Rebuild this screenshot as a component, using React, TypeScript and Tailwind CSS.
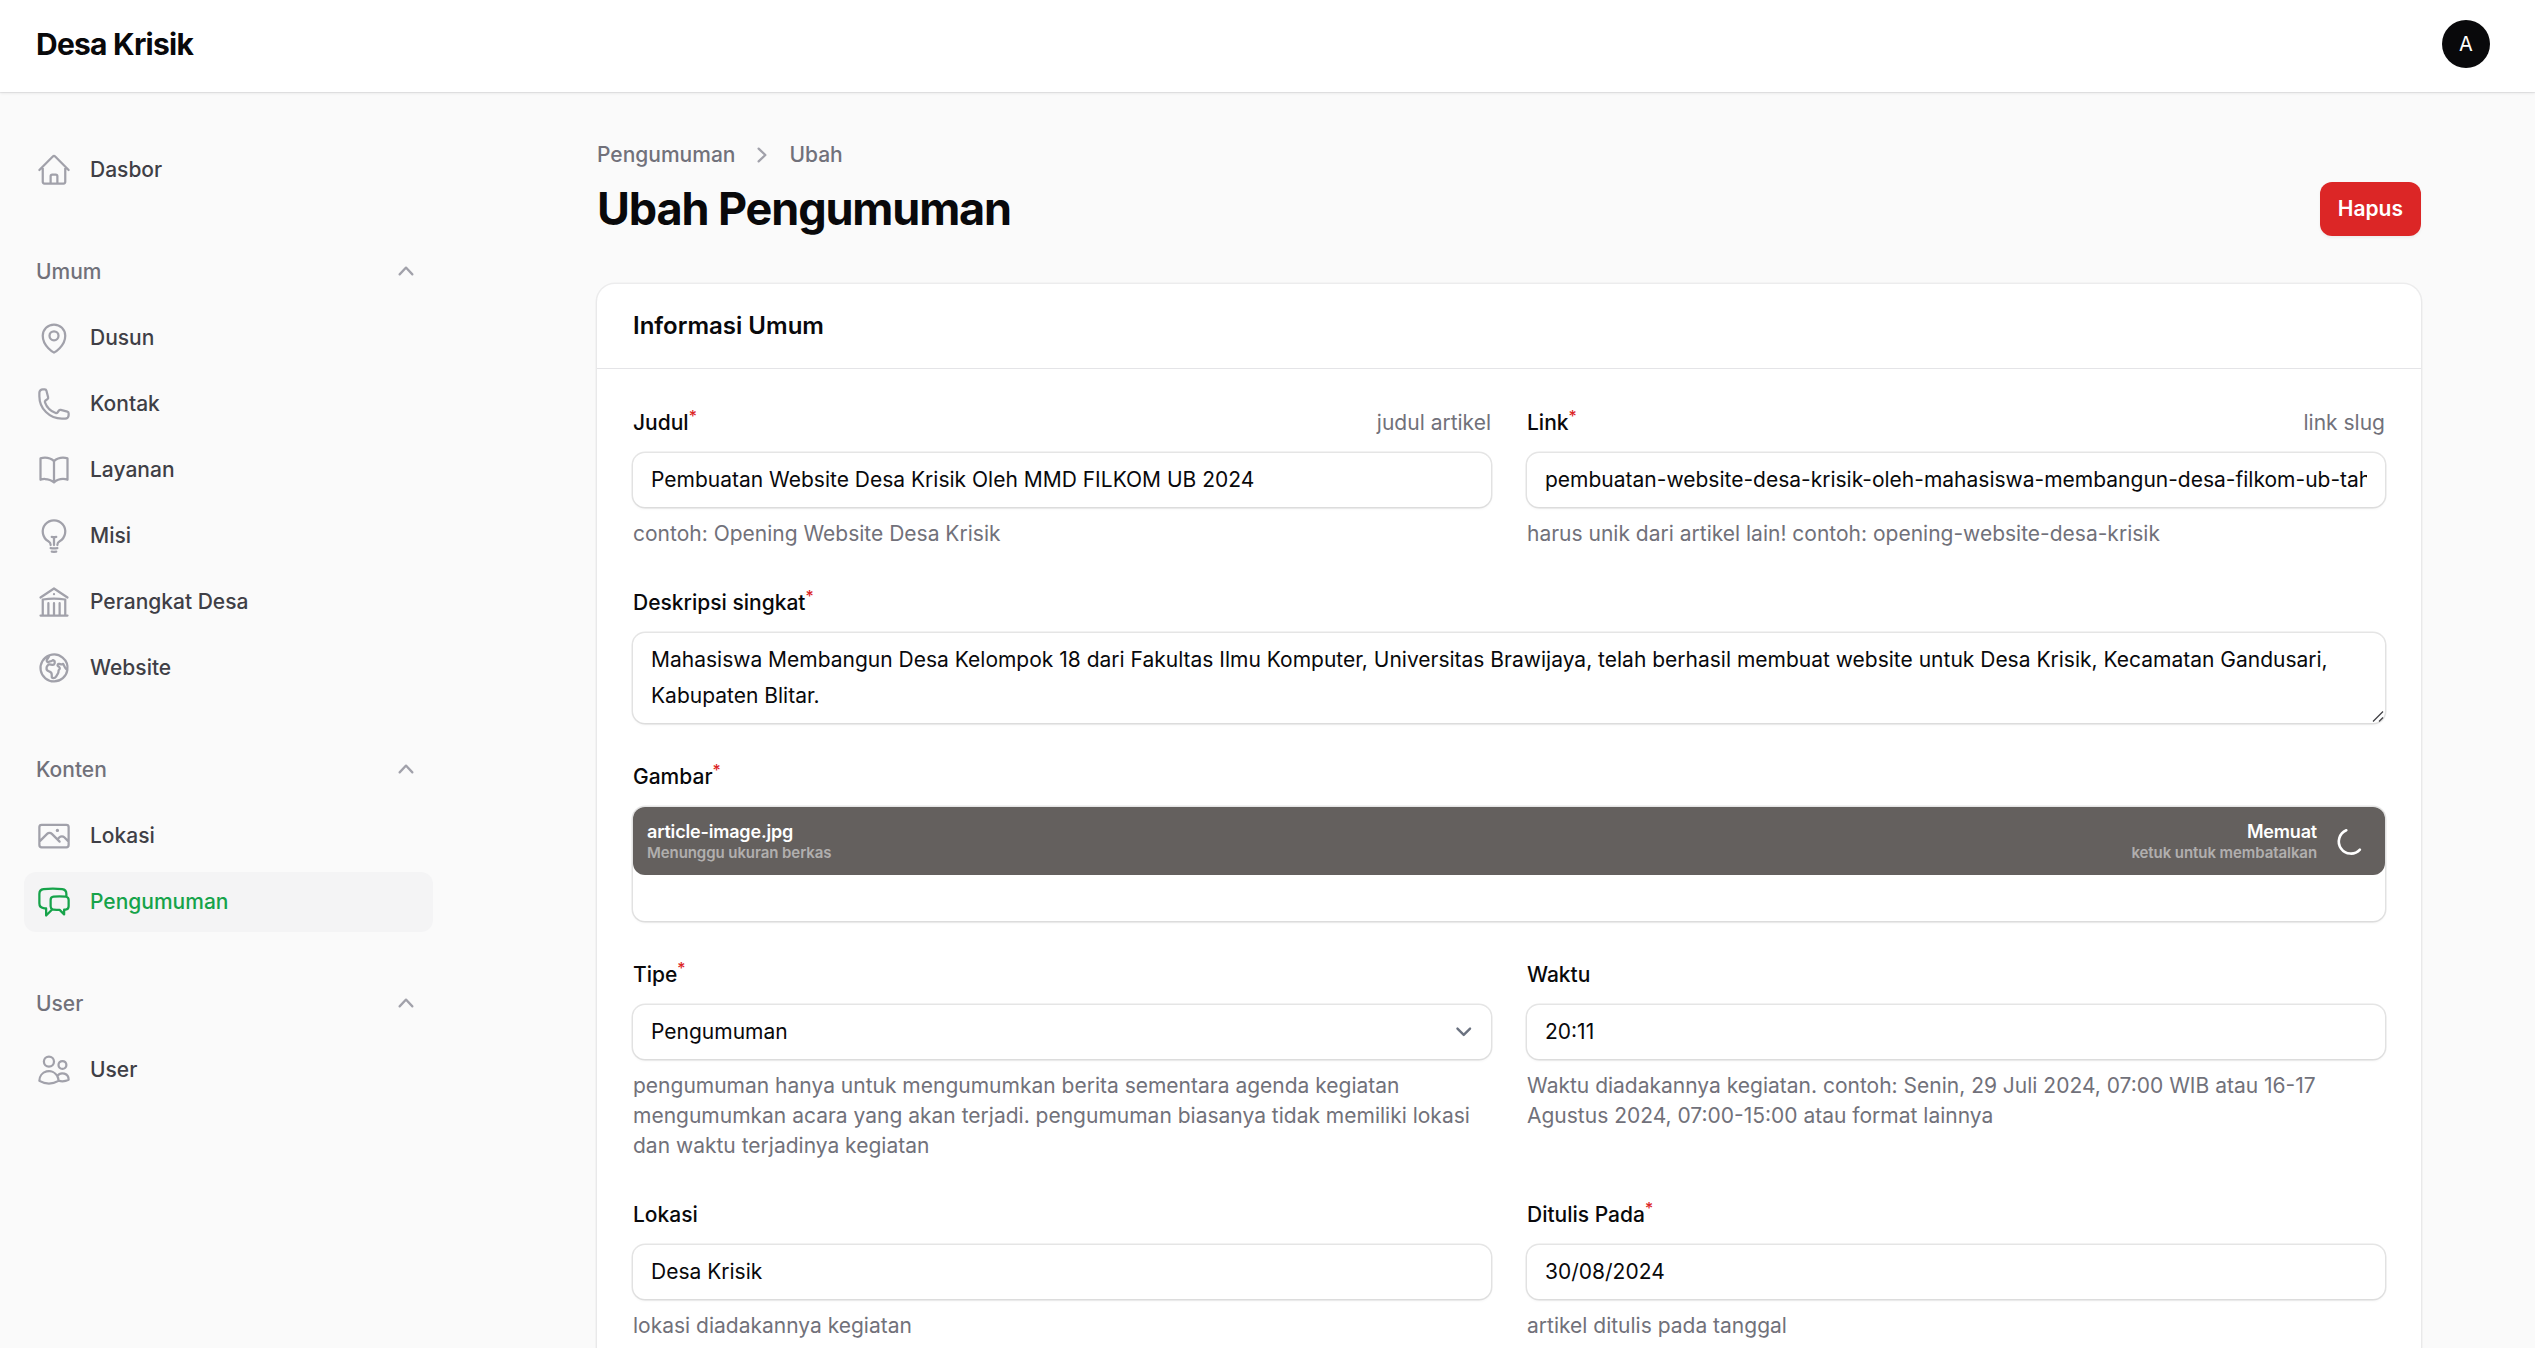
import React from "react";
import {
  HiOutlineBookOpen,
  HiOutlineBuildingLibrary,
  HiOutlineChatBubbleLeftRight,
  HiOutlineGlobeEuropeAfrica,
  HiOutlineHome,
  HiOutlineLightBulb,
  HiOutlineMapPin,
  HiOutlinePhone,
  HiOutlinePhoto,
  HiOutlineUsers,
} from "react-icons/hi2";

type IconType = React.ComponentType<{ className?: string }>;

type Item = { label: string; icon: IconType; active?: boolean };

const GROUPS: { label?: string; items: Item[] }[] = [
  { items: [{ label: "Dasbor", icon: HiOutlineHome }] },
  {
    label: "Umum",
    items: [
      { label: "Dusun", icon: HiOutlineMapPin },
      { label: "Kontak", icon: HiOutlinePhone },
      { label: "Layanan", icon: HiOutlineBookOpen },
      { label: "Misi", icon: HiOutlineLightBulb },
      { label: "Perangkat Desa", icon: HiOutlineBuildingLibrary },
      { label: "Website", icon: HiOutlineGlobeEuropeAfrica },
    ],
  },
  {
    label: "Konten",
    items: [
      { label: "Lokasi", icon: HiOutlinePhoto },
      { label: "Pengumuman", icon: HiOutlineChatBubbleLeftRight, active: true },
    ],
  },
  { label: "User", items: [{ label: "User", icon: HiOutlineUsers }] },
];

function Topbar() {
  return (
    <header className="relative z-10 flex h-[92px] shrink-0 items-center justify-between bg-white pr-[45px] pb-1 pl-9 shadow-[0_0_0_1px_rgba(9,9,11,0.05),0_1px_3px_0_rgba(0,0,0,0.1)]">
      <div className="text-[30px] leading-[30px] font-bold tracking-tight">Desa Krisik</div>
      <div className="flex size-12 items-center justify-center rounded-full bg-[#09090b] text-[20px] text-white">A</div>
    </header>
  );
}

function ChevronUp() {
  return (
    <svg viewBox="0 0 20 20" fill="#a1a1aa" className="mb-0.5 size-[30px]">
      <path
        fillRule="evenodd"
        clipRule="evenodd"
        d="M14.77 12.79a.75.75 0 0 1-1.06-.02L10 8.832 6.29 12.77a.75.75 0 1 1-1.08-1.04l4.25-4.5a.75.75 0 0 1 1.08 0l4.25 4.5a.75.75 0 0 1-.02 1.06Z"
      />
    </svg>
  );
}

function Sidebar() {
  return (
    <aside className="flex w-[457px] shrink-0 flex-col gap-[42px] px-6 py-12">
      {GROUPS.map((group, i) => (
        <div key={i} className="flex flex-col gap-1.5">
          {group.label && (
            <div className="flex h-[60px] items-center justify-between px-3 font-medium text-[#71717a]">
              <span>{group.label}</span>
              <ChevronUp />
            </div>
          )}
          {group.items.map((item) => (
            <a
              key={item.label}
              className={
                item.active
                  ? "flex h-[60px] items-center gap-[18px] rounded-xl bg-[#f4f4f5] px-3 font-medium text-[#16a34a]"
                  : "flex h-[60px] items-center gap-[18px] rounded-xl px-3 font-medium text-[#3f3f46]"
              }
            >
              <item.icon className={item.active ? "size-9 text-[#16a34a]" : "size-9 text-[#a1a1aa]"} />
              {item.label}
            </a>
          ))}
        </div>
      ))}
    </aside>
  );
}

type FieldProps = {
  label: string;
  required?: boolean;
  hint?: string;
  help?: string;
  wide?: boolean;
  children: React.ReactNode;
};

function Field({ label, required, hint, help, wide, children }: FieldProps) {
  return (
    <div className={wide ? "col-span-2 flex flex-col gap-3" : "flex min-w-0 flex-col gap-3"}>
      <div className="flex h-9 items-center justify-between">
        <span className="leading-9 font-medium">
          {label}
          {required && <sup className="text-[#dc2626]">*</sup>}
        </span>
        {hint && <span className="text-[#71717a]">{hint}</span>}
      </div>
      {children}
      {help && <p className="leading-[30px] text-[#71717a]">{help}</p>}
    </div>
  );
}

function Control({ children }: { children: React.ReactNode }) {
  return (
    <div className="rounded-xl bg-white shadow-[0_0_0_1.5px_rgba(9,9,11,0.1),0_1.5px_3px_0_rgba(0,0,0,0.05)]">
      {children}
    </div>
  );
}

function TextInput({ value }: { value: string }) {
  return (
    <Control>
      <div className="px-[18px] py-[9px]">
        <div className="h-9 overflow-hidden leading-9 whitespace-nowrap">{value}</div>
      </div>
    </Control>
  );
}

function Upload() {
  return (
    <Control>
      <div className="h-[114px]">
        <div className="flex h-[67.5px] items-center justify-between rounded-xl bg-[#64605e] pt-[2px] pr-[23px] pl-[14px] font-semibold text-white">
          <div className="flex flex-col">
            <span className="text-[18px] leading-[22px] tracking-[-0.01em]">article-image.jpg</span>
            <span className="text-[15px] leading-5 tracking-[-0.005em] text-white/50">Menunggu ukuran berkas</span>
          </div>
          <div className="flex items-center gap-[19px]">
            <div className="flex flex-col items-end">
              <span className="text-[18px] leading-[22px] tracking-[-0.01em]">Memuat</span>
              <span className="text-[15px] leading-5 tracking-[-0.005em] text-white/50">ketuk untuk membatalkan</span>
            </div>
            <svg viewBox="0 0 26 26" fill="none" className="size-[26px] overflow-visible">
              <path d="M10.3 1.3A12.1 12.1 0 1 0 23.9 20.6" stroke="#fff" strokeWidth="2.6" strokeLinecap="round" />
            </svg>
          </div>
        </div>
      </div>
    </Control>
  );
}

function PageHeader() {
  return (
    <div className="flex items-end justify-between">
      <div>
        <nav className="mb-3 flex h-[30px] items-center gap-3 font-medium text-[#71717a]">
          <span>Pengumuman</span>
          <svg viewBox="0 0 20 20" fill="#a1a1aa" className="size-[30px]">
            <path
              fillRule="evenodd"
              clipRule="evenodd"
              d="M7.21 14.77a.75.75 0 0 1 .02-1.06L11.168 10 7.23 6.29a.75.75 0 1 1 1.04-1.08l4.5 4.25a.75.75 0 0 1 0 1.08l-4.5 4.25a.75.75 0 0 1-1.06-.02Z"
            />
          </svg>
          <span>Ubah</span>
        </nav>
        <h1 className="text-[45px] leading-[54px] font-bold tracking-tight">Ubah Pengumuman</h1>
      </div>
      <button className="h-[54px] rounded-xl bg-[#dc2626] px-[18px] font-semibold text-white shadow-[0_1.5px_3px_0_rgba(0,0,0,0.05)]">
        Hapus
      </button>
    </div>
  );
}

export default function App() {
  return (
    <div className="flex h-[1348px] w-[2535px] flex-col overflow-hidden bg-[#fafafa] font-[Inter,sans-serif] text-[21px] leading-[30px] text-[#09090b] antialiased">
      <Topbar />
      <div className="flex min-h-0 flex-1">
        <Sidebar />
        <main className="ml-[140px] flex w-[1824px] shrink-0 flex-col gap-12 pt-12">
          <PageHeader />
          <section className="rounded-[18px] bg-white shadow-[0_0_0_1.5px_rgba(9,9,11,0.05),0_1.5px_3px_0_rgba(0,0,0,0.05)]">
            <h2 className="px-9 py-6 text-[24px] leading-9 font-semibold">Informasi Umum</h2>
            <div className="grid grid-cols-2 gap-9 border-t border-[#e4e4e7] p-9">
              <Field label="Judul" required hint="judul artikel" help="contoh: Opening Website Desa Krisik">
                <TextInput value="Pembuatan Website Desa Krisik Oleh MMD FILKOM UB 2024" />
              </Field>
              <Field
                label="Link"
                required
                hint="link slug"
                help="harus unik dari artikel lain! contoh: opening-website-desa-krisik"
              >
                <TextInput value="pembuatan-website-desa-krisik-oleh-mahasiswa-membangun-desa-filkom-ub-tah" />
              </Field>
              <Field label="Deskripsi singkat" required wide>
                <Control>
                  <div className="relative px-[18px] py-[9px] leading-9">
                    Mahasiswa Membangun Desa Kelompok 18 dari Fakultas Ilmu Komputer, Universitas Brawijaya, telah
                    berhasil membuat website untuk Desa Krisik, Kecamatan Gandusari, Kabupaten Blitar.
                    <svg
                      viewBox="0 0 12 12"
                      fill="none"
                      stroke="#444448"
                      strokeWidth="1.3"
                      className="absolute right-[1.5px] bottom-[1.5px] size-3"
                    >
                      <path d="M1 11.5 11 1.5M7 11.5 11 7.5" />
                    </svg>
                  </div>
                </Control>
              </Field>
              <Field label="Gambar" required wide>
                <Upload />
              </Field>
              <Field
                label="Tipe"
                required
                help="pengumuman hanya untuk mengumumkan berita sementara agenda kegiatan mengumumkan acara yang akan terjadi. pengumuman biasanya tidak memiliki lokasi dan waktu terjadinya kegiatan"
              >
                <Control>
                  <div className="flex h-[54px] items-center justify-between pr-3 pl-[18px]">
                    <span>Pengumuman</span>
                    <svg
                      viewBox="0 0 20 20"
                      fill="none"
                      stroke="#6b7280"
                      strokeWidth="1.5"
                      strokeLinecap="round"
                      strokeLinejoin="round"
                      className="size-[31.5px]"
                    >
                      <path d="m6 8 4 4 4-4" />
                    </svg>
                  </div>
                </Control>
              </Field>
              <Field
                label="Waktu"
                help="Waktu diadakannya kegiatan. contoh: Senin, 29 Juli 2024, 07:00 WIB atau 16-17 Agustus 2024, 07:00-15:00 atau format lainnya"
              >
                <TextInput value="20:11" />
              </Field>
              <Field label="Lokasi" help="lokasi diadakannya kegiatan">
                <TextInput value="Desa Krisik" />
              </Field>
              <Field label="Ditulis Pada" required help="artikel ditulis pada tanggal">
                <TextInput value="30/08/2024" />
              </Field>
            </div>
          </section>
        </main>
      </div>
    </div>
  );
}
